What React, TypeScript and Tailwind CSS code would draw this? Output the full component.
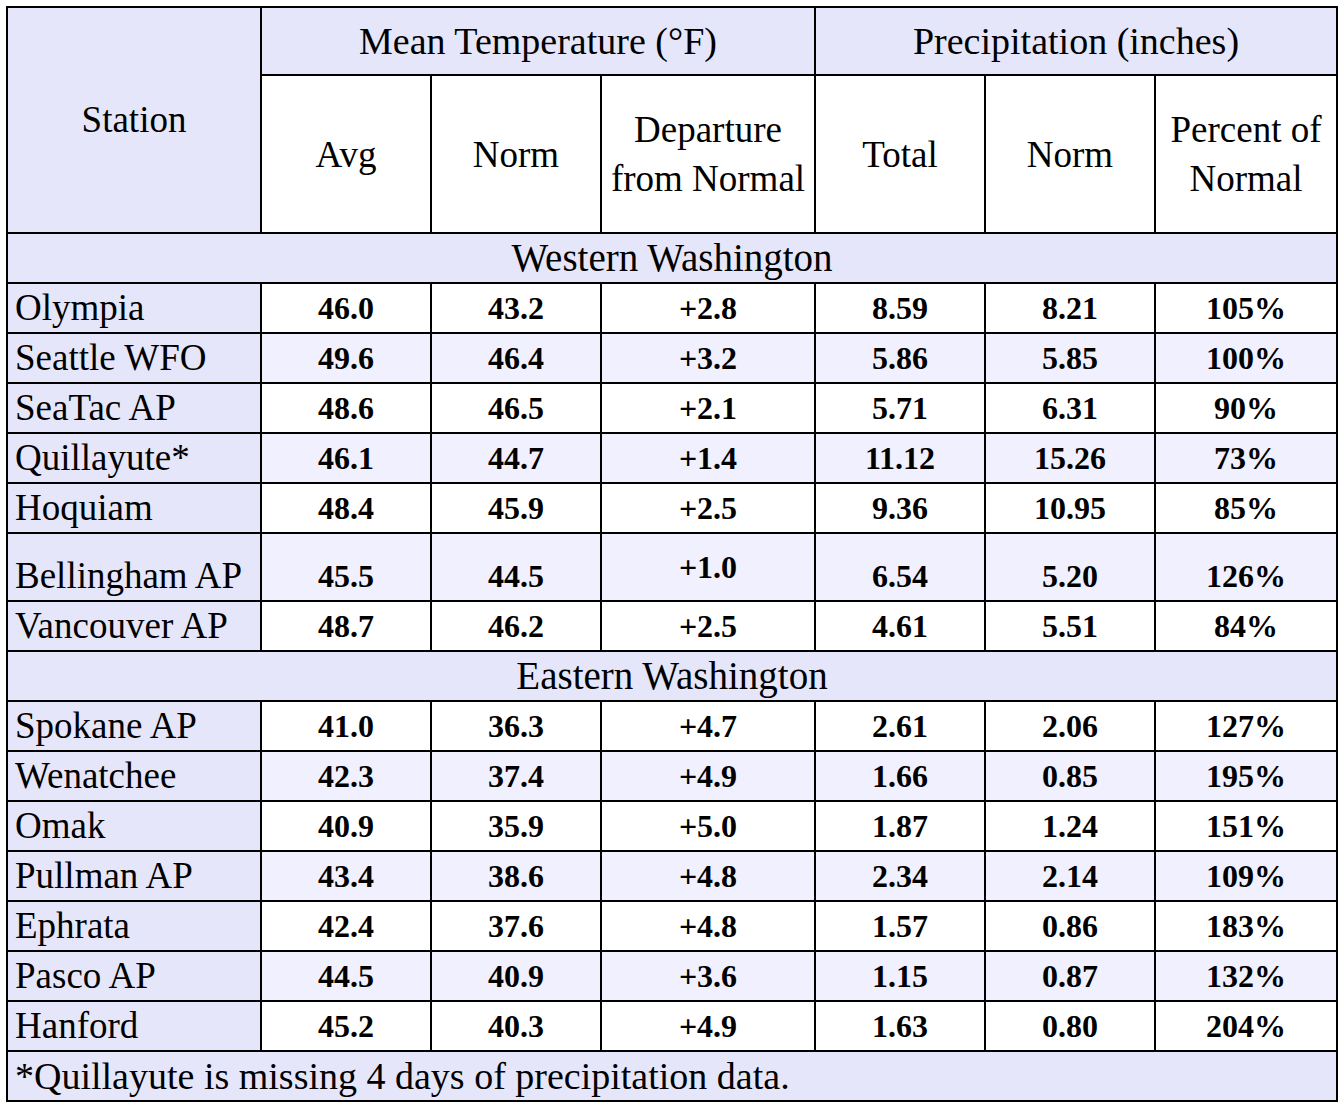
import React from 'react';

type Row = {
  name: string;
  avg: string;
  norm: string;
  dep: string;
  total: string;
  pnorm: string;
  pct: string;
  tall?: boolean;
};

const WESTERN: Row[] = [
  { name: 'Olympia', avg: '46.0', norm: '43.2', dep: '+2.8', total: '8.59', pnorm: '8.21', pct: '105%' },
  { name: 'Seattle WFO', avg: '49.6', norm: '46.4', dep: '+3.2', total: '5.86', pnorm: '5.85', pct: '100%' },
  { name: 'SeaTac AP', avg: '48.6', norm: '46.5', dep: '+2.1', total: '5.71', pnorm: '6.31', pct: '90%' },
  { name: 'Quillayute*', avg: '46.1', norm: '44.7', dep: '+1.4', total: '11.12', pnorm: '15.26', pct: '73%' },
  { name: 'Hoquiam', avg: '48.4', norm: '45.9', dep: '+2.5', total: '9.36', pnorm: '10.95', pct: '85%' },
  { name: 'Bellingham AP', avg: '45.5', norm: '44.5', dep: '+1.0', total: '6.54', pnorm: '5.20', pct: '126%', tall: true },
  { name: 'Vancouver AP', avg: '48.7', norm: '46.2', dep: '+2.5', total: '4.61', pnorm: '5.51', pct: '84%' },
];

const EASTERN: Row[] = [
  { name: 'Spokane AP', avg: '41.0', norm: '36.3', dep: '+4.7', total: '2.61', pnorm: '2.06', pct: '127%' },
  { name: 'Wenatchee', avg: '42.3', norm: '37.4', dep: '+4.9', total: '1.66', pnorm: '0.85', pct: '195%' },
  { name: 'Omak', avg: '40.9', norm: '35.9', dep: '+5.0', total: '1.87', pnorm: '1.24', pct: '151%' },
  { name: 'Pullman AP', avg: '43.4', norm: '38.6', dep: '+4.8', total: '2.34', pnorm: '2.14', pct: '109%' },
  { name: 'Ephrata', avg: '42.4', norm: '37.6', dep: '+4.8', total: '1.57', pnorm: '0.86', pct: '183%' },
  { name: 'Pasco AP', avg: '44.5', norm: '40.9', dep: '+3.6', total: '1.15', pnorm: '0.87', pct: '132%' },
  { name: 'Hanford', avg: '45.2', norm: '40.3', dep: '+4.9', total: '1.63', pnorm: '0.80', pct: '204%' },
];

function DataRow({ row, shaded }: { row: Row; shaded: boolean }) {
  const bg = shaded ? 'bg-[#f0f0ff]' : 'bg-white';
  const h = row.tall ? 'h-[66px]' : 'h-[48px]';
  const align = row.tall ? 'items-end' : 'items-center';
  const num = `flex ${align} justify-center ${h} ${bg} text-[32px] font-bold leading-[48px]`;
  return (
    <>
      <div className={`flex ${align} ${h} bg-[#e6e6fa] pl-[7px] text-[37px] leading-[48px]`}>{row.name}</div>
      <div className={num}>{row.avg}</div>
      <div className={num}>{row.norm}</div>
      <div className={`flex items-center justify-center ${h} ${bg} text-[32px] font-bold leading-[48px]`}>{row.dep}</div>
      <div className={num}>{row.total}</div>
      <div className={num}>{row.pnorm}</div>
      <div className={num}>{row.pct}</div>
    </>
  );
}

function Section({ title, rows }: { title: string; rows: Row[] }) {
  return (
    <>
      <div className="col-span-7 flex h-[48px] items-center justify-center bg-[#e6e6fa] text-[39px] leading-[48px]">
        {title}
      </div>
      {rows.map((r, i) => (
        <DataRow key={r.name} row={r} shaded={i % 2 === 1} />
      ))}
    </>
  );
}

export default function App() {
  const sub = 'flex h-[156px] items-center justify-center bg-white text-center text-[37px] leading-[49px]';
  return (
    <div className="min-h-screen bg-white p-[6px] font-['Liberation_Serif',serif] text-black">
      <div className="grid w-fit grid-cols-[252px_168px_168px_212px_168px_168px_180px] gap-[2px] border-2 border-black bg-black">
        <div className="row-span-2 flex items-center justify-center bg-[#e6e6fa] text-[37px]">Station</div>
        <div className="col-span-3 flex h-[66px] items-center justify-center bg-[#e6e6fa] text-[38px]">
          Mean Temperature (°F)
        </div>
        <div className="col-span-3 flex h-[66px] items-center justify-center bg-[#e6e6fa] text-[38px]">
          Precipitation (inches)
        </div>
        <div className={sub}>Avg</div>
        <div className={sub}>Norm</div>
        <div className={sub}>
          Departure
          <br />
          from Normal
        </div>
        <div className={sub}>Total</div>
        <div className={sub}>Norm</div>
        <div className={sub}>
          Percent of
          <br />
          Normal
        </div>

        <Section title="Western Washington" rows={WESTERN} />
        <Section title="Eastern Washington" rows={EASTERN} />

        <div className="col-span-7 flex h-[48px] items-center bg-[#e6e6fa] pl-[7px] text-[38px] leading-[48px]">
          *Quillayute is missing 4 days of precipitation data.
        </div>
      </div>
    </div>
  );
}
